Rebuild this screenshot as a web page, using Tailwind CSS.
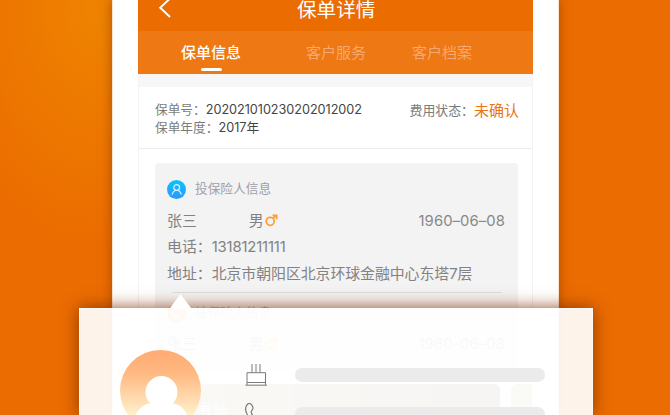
<!DOCTYPE html>
<html lang="zh-CN">
<head>
    <meta charset="UTF-8">
    <title>保单详情</title>
    <script src="https://cdn.jsdelivr.net/npm/@tailwindcss/browser@4"></script>
</head>
<body class="relative flex h-[415px] w-[670px] overflow-hidden bg-[#eb6c00] bg-[radial-gradient(ellipse_160px_240px_at_95px_10px,#ef8300,transparent)] font-[Inter,'Noto_Sans_CJK_SC',sans-serif]">
    <!-- Phone -->
    <div class="ml-[112px] h-[415px] w-[447px] shrink-0 overflow-hidden border-x border-[#fbe3d0] bg-white px-[25px] shadow-[0_0_11px_rgba(130,50,0,0.6)]">
        <div class="flex h-full w-[395px] flex-col border-x border-[#f3f3f3]">
            <header class="-mx-px flex h-[31px] shrink-0 items-start bg-[#eb6c00] text-white">
                <svg class="ml-[20px] h-[18px] w-[14px]" viewBox="0 0 14 18" fill="none" stroke="white" stroke-width="1.9"><path d="M12 -1.5 2.2 7.8 12 17"/></svg>
                <h1 class="ml-[125px] text-[19.6px] leading-[21px]">保单详情</h1>
            </header>
            <nav class="-mx-px flex h-[43px] shrink-0 bg-[#ee7813] pt-[12px] text-[15px] leading-[20px] text-[#f5a871]">
                <div class="ml-[43px] flex w-[60px] flex-col items-center font-medium text-white">
                    <span>保单信息</span>
                    <i class="mt-[5px] h-[3px] w-[21px] rounded-full bg-white"></i>
                </div>
                <span class="ml-[65px]">客户服务</span>
                <span class="ml-[46px]">客户档案</span>
            </nav>
            <div class="h-[13px] shrink-0 bg-[#f7f7f7]"></div>

            <section class="flex h-[62px] shrink-0 justify-between border-b border-[#ececec] pt-[14px] pr-[13px] pl-[16px] text-[12.7px] leading-[18px] text-[#7c7c7c]">
                <div>
                    <p class="flex whitespace-nowrap">保单号：<span class="text-[12.7px] tracking-[-0.05px] text-[#444]">202021010230202012002</span></p>
                    <p class="flex whitespace-nowrap">保单年度：<span class="text-[12.7px] text-[#444]">2017年</span></p>
                </div>
                <p class="flex pt-px text-[12.9px]">费用状态：<span class="text-[15px] text-[#ec7213]">未确认</span></p>
            </section>

            <section class="mx-[16px] mt-[14px] h-[208px] w-[363px] shrink-0 rounded-[4px] bg-[#f3f3f3] px-[12px] pt-[16px] text-[14.9px] text-[#828282]">
                <div class="flex h-[20px] items-center gap-[9px] text-[12.7px] text-[#a0a0aa]">
                    <svg class="size-[19px]" viewBox="0 0 19 19" fill="none">
                        <defs><linearGradient id="blue" x1="0" y1="0" x2="0" y2="1"><stop stop-color="#08c5fb"/><stop offset="1" stop-color="#2e96fb"/></linearGradient></defs>
                        <circle cx="9.5" cy="9.5" r="9.5" fill="url(#blue)"/>
                        <g stroke="#d9f2ff" stroke-width="1.2" stroke-linecap="round"><circle cx="9.7" cy="7.5" r="2.9"/><path d="M8.5 10.2C7 10.8 5.6 12.2 5.2 14.2M10.9 10.2c1.5.6 2.9 2 3.3 4"/></g>
                    </svg>
                    <span>投保险人信息</span>
                </div>
                <div class="mt-[12px] flex h-[20px] items-center">
                    <span>张三</span>
                    <span class="ml-[52px]">男</span>
                    <svg class="ml-[1px] size-[13px] -translate-y-px" viewBox="0 0 13 13" fill="none" stroke="#ff9f2e" stroke-width="1.7"><circle cx="5.2" cy="7.3" r="4"/><path d="M8 4.4 11.3 1.3M7.5 1.3h4.2v4"/></svg>
                    <span class="ml-auto pr-[1px] text-[14.8px] tracking-[0.1px] text-[#888]">1960–06–08</span>
                </div>
                <div class="mt-[6px] flex h-[20px] items-center">电话：<span class="text-[14.8px] tracking-[-0.15px]">13181211111</span></div>
                <div class="mt-[7px] flex h-[20px] items-center whitespace-nowrap">地址：<span class="tracking-[-0.05px]">北京市朝阳区北京环球金融中心东塔7层</span></div>
                <div class="mt-[8px] ml-[5px] h-px w-[330px] bg-[#ddd]"></div>
                <div class="mt-[10px] flex h-[20px] items-center gap-[9px] text-[12.7px] text-[#9e9ea8] opacity-75">
                    <svg class="size-[19px]" viewBox="0 0 19 19" fill="none"><circle cx="9.5" cy="9.5" r="9.5" fill="#ff9a3c"/><circle cx="9.5" cy="9" r="4.5" stroke="white" stroke-width="1.2"/><path d="M7 8.5h1M11 8.5h1M7.5 11h4" stroke="white"/></svg>
                    <span>被保险人信息</span>
                </div>
                <div class="mt-[11px] flex h-[20px] items-center opacity-75">
                    <span>张三</span>
                    <span class="ml-[52px]">男</span>
                    <svg class="ml-[1px] size-[13px] -translate-y-px" viewBox="0 0 13 13" fill="none" stroke="#ff9f2e" stroke-width="1.7"><circle cx="5.2" cy="7.3" r="4"/><path d="M8 4.4 11.3 1.3M7.5 1.3h4.2v4"/></svg>
                    <span class="ml-auto pr-[1px] text-[14.8px] tracking-[0.1px] text-[#888]">1960–06–08</span>
                </div>
            </section>

            <!-- Policy cards, scrolled horizontally -->
            <div class="mt-[13px] flex h-[31px] shrink-0 gap-[11px] overflow-hidden pl-[16px]">
                <div class="w-[345px] shrink-0 rounded-t-[6px] bg-linear-to-r from-[#c0b78f] to-[#8f7b65] pt-[18px] pl-[43px] text-[15px] leading-[20px] text-white">寿险</div>
                <div class="w-[22px] shrink-0 rounded-tl-[6px] bg-[#c0b78f]"></div>
            </div>
        </div>
    </div>

    <!-- Customer popup -->
    <div class="absolute top-[308px] left-[79px] h-[107px] w-[514px] border border-b-0 border-white/50 bg-white/92 shadow-[0_0_16px_rgba(125,45,0,0.85)]">
        <svg class="absolute -top-[15px] left-[90px] h-[14px] w-[21px]" viewBox="0 0 21 14"><path d="M0 14 10.5 0 21 14z" fill="white"/></svg>
        <div class="flex h-[106px] items-start overflow-hidden">
            <svg class="mt-[41px] ml-[40px] size-[81px] shrink-0" viewBox="0 0 81 81">
                <defs>
                    <linearGradient id="peach" x1="0" y1="0" x2="0" y2="1"><stop stop-color="#ffaa72"/><stop offset=".3" stop-color="#ffba83"/><stop offset=".8" stop-color="#fff0cb"/></linearGradient>
                    <clipPath id="round"><circle cx="40.5" cy="40.5" r="40.5"/></clipPath>
                </defs>
                <g clip-path="url(#round)">
                    <rect width="81" height="81" fill="url(#peach)"/>
                    <circle cx="41.5" cy="42" r="16" fill="white"/>
                    <path d="M12 81C13 64 20 54 32 53q9 6 19 0c12 1 19 11 20 28z" fill="white"/>
                </g>
            </svg>
            <div class="ml-[44px] flex flex-col gap-[17px] pt-[55px]">
                <svg class="h-[22px] w-[22px]" viewBox="0 0 22 22" fill="none" stroke="#7b7b7b" stroke-width="1"><path d="M2 21V8.7h18.5V21M2 18.5h18.5M.5 21.2h21.3M7 0v8.5M11 0v8.5M15 0v8.5"/></svg>
                <svg class="h-[22px] w-[22px]" viewBox="0 0 22 22" fill="none" stroke="#7b7b7b" stroke-width="1.2"><path d="M3 .8C5-.2 6.4 1 7.4 3c.9 2 .9 3.2-.4 4.2-1 .8-1 1.5-.5 2.8C7.4 13 9 15 12 17M3 .8C.2 3 .2 7 1.8 10.5 4 15 7 18 10 20"/></svg>
            </div>
            <div class="ml-[28px] flex flex-col gap-[25px] pt-[59px]">
                <div class="h-[14px] w-[250px] rounded-full bg-[#ebebeb]"></div>
                <div class="h-[14px] w-[250px] rounded-full bg-[#ebebeb]"></div>
            </div>
        </div>
    </div>
</body>
</html>
